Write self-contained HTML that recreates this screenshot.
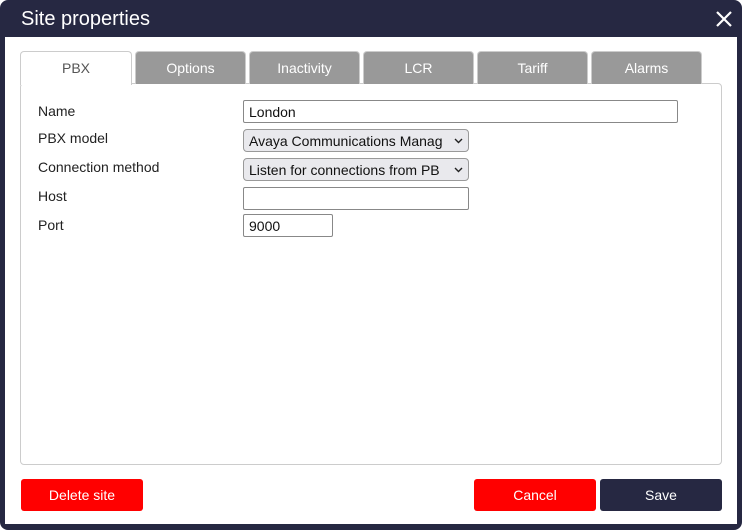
<!DOCTYPE html>
<html><head><meta charset="utf-8"><style>
*{box-sizing:border-box;margin:0;padding:0}
body{width:742px;height:530px;background:#fff;font-family:"Liberation Sans",sans-serif;position:relative;overflow:hidden}
.frame{position:absolute;left:0;top:0;width:742px;height:530px;background:#262842;border-radius:8px}
.title{position:absolute;left:21px;top:8px;color:#fff;font-size:20px}
.x{position:absolute;left:714px;top:9px;width:20px;height:20px}
.body{position:absolute;left:5px;top:37px;width:732px;height:487px;background:#fff}
.panel{position:absolute;left:20px;top:83px;width:702px;height:382px;border:1px solid #ccc;border-radius:4px;background:#fff}
.tab{position:absolute;top:51px;height:33px;width:111px;background:#999;border:1px solid #ccc;border-bottom:none;border-radius:4px 4px 0 0;color:#fff;font-size:14px;text-align:center;line-height:33px}
.tab.on{background:#fff;color:#555;height:34px;z-index:2;width:112px}
.lbl{position:absolute;left:38px;font-size:14px;color:#222}
.in{position:absolute;left:243px;height:23px;border:1px solid #888;border-radius:2px;font-size:14px;padding-left:5px;line-height:22px;color:#111;background:#fff;white-space:nowrap;overflow:hidden}
.sel{background:#e9e9ed;border-color:#999;border-radius:4px;width:226px;padding-right:18px}
.sel svg{position:absolute;right:5px;top:8px;width:9px;height:6px;background:#e9e9ed}
.btn{position:absolute;top:479px;height:32px;width:122px;border-radius:3px;color:#fff;font-size:14px;text-align:center;line-height:32px}
</style></head><body>
<div class="frame"></div>
<div class="title">Site properties</div>
<svg class="x" viewBox="0 0 20 20"><path d="M3 3L17 17M17 3L3 17" stroke="#fff" stroke-width="2.2"/></svg>
<div class="body"></div>
<div class="panel"></div>
<div class="tab on" style="left:20px">PBX</div>
<div class="tab" style="left:135px">Options</div>
<div class="tab" style="left:249px">Inactivity</div>
<div class="tab" style="left:363px">LCR</div>
<div class="tab" style="left:477px">Tariff</div>
<div class="tab" style="left:591px">Alarms</div>
<div class="lbl" style="top:103px">Name</div>
<div class="lbl" style="top:130px">PBX model</div>
<div class="lbl" style="top:159px">Connection method</div>
<div class="lbl" style="top:188px">Host</div>
<div class="lbl" style="top:217px">Port</div>
<div class="in" style="top:100px;width:435px">London</div>
<div class="in sel" style="top:129px">Avaya Communications Manag<svg viewBox="0 0 9 6"><path d="M1 1L4.5 4.5L8 1" stroke="#222" stroke-width="1.4" fill="none"/></svg></div>
<div class="in sel" style="top:158px">Listen for connections from PB<svg viewBox="0 0 9 6"><path d="M1 1L4.5 4.5L8 1" stroke="#222" stroke-width="1.4" fill="none"/></svg></div>
<div class="in" style="top:187px;width:226px"></div>
<div class="in" style="top:214px;width:90px">9000</div>
<div class="btn" style="left:21px;background:#f00">Delete site</div>
<div class="btn" style="left:474px;background:#f00">Cancel</div>
<div class="btn" style="left:600px;background:#262842">Save</div>
</body></html>
